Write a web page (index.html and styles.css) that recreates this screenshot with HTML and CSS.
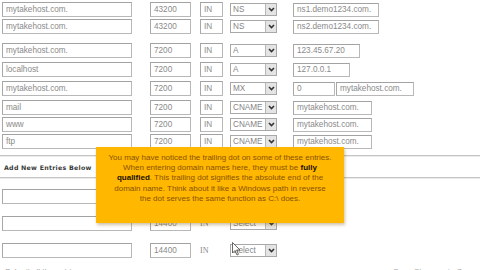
FILE: index.html
```html
<!DOCTYPE html>
<html>
<head>
<meta charset="utf-8">
<link rel="stylesheet" href="styles.css">
</head>
<body>
<div class="page">
  <div class="group g1">
    <div class="row">
      <span class="box name">mytakehost.com.</span>
      <span class="box ttl">43200</span>
      <span class="box cls">IN</span>
      <span class="sel"><span class="seltext">NS</span><span class="arrow"><svg width="9" height="9" viewBox="0 0 9 9"><path d="M2 3 L4.5 5.5 L7 3" fill="none" stroke="#333" stroke-width="1.6"/></svg></span></span>
      <span class="box val w86">ns1.demo1234.com.</span>
    </div>
    <div class="row">
      <span class="box name">mytakehost.com.</span>
      <span class="box ttl">43200</span>
      <span class="box cls">IN</span>
      <span class="sel"><span class="seltext">NS</span><span class="arrow"><svg width="9" height="9" viewBox="0 0 9 9"><path d="M2 3 L4.5 5.5 L7 3" fill="none" stroke="#333" stroke-width="1.6"/></svg></span></span>
      <span class="box val w86">ns2.demo1234.com.</span>
    </div>
  </div>
  <div class="group g2">
    <div class="row">
      <span class="box name">mytakehost.com.</span>
      <span class="box ttl">7200</span>
      <span class="box cls">IN</span>
      <span class="sel"><span class="seltext">A</span><span class="arrow"><svg width="9" height="9" viewBox="0 0 9 9"><path d="M2 3 L4.5 5.5 L7 3" fill="none" stroke="#333" stroke-width="1.6"/></svg></span></span>
      <span class="box val w67">123.45.67.20</span>
    </div>
    <div class="row">
      <span class="box name">localhost</span>
      <span class="box ttl">7200</span>
      <span class="box cls">IN</span>
      <span class="sel"><span class="seltext">A</span><span class="arrow"><svg width="9" height="9" viewBox="0 0 9 9"><path d="M2 3 L4.5 5.5 L7 3" fill="none" stroke="#333" stroke-width="1.6"/></svg></span></span>
      <span class="box val w57">127.0.0.1</span>
    </div>
    <div class="row">
      <span class="box name">mytakehost.com.</span>
      <span class="box ttl">7200</span>
      <span class="box cls">IN</span>
      <span class="sel"><span class="seltext">MX</span><span class="arrow"><svg width="9" height="9" viewBox="0 0 9 9"><path d="M2 3 L4.5 5.5 L7 3" fill="none" stroke="#333" stroke-width="1.6"/></svg></span></span>
      <span class="box val w42">0</span>
      <span class="box val2">mytakehost.com.</span>
    </div>
  </div>
  <div class="group g3">
    <div class="row">
      <span class="box name">mail</span>
      <span class="box ttl">7200</span>
      <span class="box cls">IN</span>
      <span class="sel"><span class="seltext">CNAME</span><span class="arrow"><svg width="9" height="9" viewBox="0 0 9 9"><path d="M2 3 L4.5 5.5 L7 3" fill="none" stroke="#333" stroke-width="1.6"/></svg></span></span>
      <span class="box val w79">mytakehost.com.</span>
    </div>
    <div class="row">
      <span class="box name">www</span>
      <span class="box ttl">7200</span>
      <span class="box cls">IN</span>
      <span class="sel"><span class="seltext">CNAME</span><span class="arrow"><svg width="9" height="9" viewBox="0 0 9 9"><path d="M2 3 L4.5 5.5 L7 3" fill="none" stroke="#333" stroke-width="1.6"/></svg></span></span>
      <span class="box val w79">mytakehost.com.</span>
    </div>
    <div class="row">
      <span class="box name">ftp</span>
      <span class="box ttl">7200</span>
      <span class="box cls">IN</span>
      <span class="sel"><span class="seltext">CNAME</span><span class="arrow"><svg width="9" height="9" viewBox="0 0 9 9"><path d="M2 3 L4.5 5.5 L7 3" fill="none" stroke="#333" stroke-width="1.6"/></svg></span></span>
      <span class="box val w79">mytakehost.com.</span>
    </div>
  </div>
  <div class="divider">
    <span class="addtitle">Add New Entries Below</span>
  </div>
  <div class="group g4">
    <div class="row newrow">
      <span class="box name"></span>
      <span class="box ttl">14400</span>
      <span class="plain">IN</span>
      <span class="sel"><span class="seltext">Select</span><span class="arrow"><svg width="9" height="9" viewBox="0 0 9 9"><path d="M2 3 L4.5 5.5 L7 3" fill="none" stroke="#333" stroke-width="1.6"/></svg></span></span>
    </div>
    <div class="row newrow">
      <span class="box name"></span>
      <span class="box ttl">14400</span>
      <span class="plain">IN</span>
      <span class="sel"><span class="seltext">Select</span><span class="arrow"><svg width="9" height="9" viewBox="0 0 9 9"><path d="M2 3 L4.5 5.5 L7 3" fill="none" stroke="#333" stroke-width="1.6"/></svg></span></span>
    </div>
    <div class="row newrow">
      <span class="box name"></span>
      <span class="box ttl">14400</span>
      <span class="plain">IN</span>
      <span class="sel"><span class="seltext">Select</span><span class="arrow"><svg width="9" height="9" viewBox="0 0 9 9"><path d="M2 3 L4.5 5.5 L7 3" fill="none" stroke="#333" stroke-width="1.6"/></svg></span></span>
    </div>
    <div class="row footrow">
      <span class="foottext">Submit all the entries</span>
      <span class="footline"></span>
      <span class="foottext2">Save Changes to Zone</span>
    </div>
  </div>

  <div class="tooltip">
    You may have noticed the trailing dot on some of these entries.<br>
    When entering domain names here, they must be <b>fully<br>qualified</b>. This trailing dot signifies the absolute end of the<br>
    domain name. Think about it like a Windows path in reverse<br>
    the dot serves the same function as C:\ does.
  </div>

  <svg class="cursor" width="9" height="14" viewBox="0 0 9 14"><path d="M0.5 0.5 L0.5 11 L3 8.5 L5 13 L6.5 12.3 L4.6 8 L8 8 Z" fill="#fff" stroke="#444" stroke-width="0.8"/></svg>
</div>
</body>
</html>
```
FILE: styles.css
```css
html, body {
  margin: 0;
  padding: 0;
  background: #fff;
}
.page {
  position: relative;
  width: 480px;
  height: 270px;
  overflow: hidden;
  font-family: "Liberation Sans", Arial, sans-serif;
  font-size: 8.2px;
  color: #8a8a8a;
  padding-top: 2px;
  box-sizing: border-box;
}
.group {
  display: flex;
  flex-direction: column;
}
.g1 { gap: 2px; }
.g2 { gap: 4px; margin-top: 9px; }
.g3 { gap: 2px; margin-top: 4px; }
.row {
  display: flex;
  align-items: center;
  height: 15px;
}
.box {
  box-sizing: border-box;
  height: 15px;
  border: 1px solid #b8b8b8;
  border-top-color: #a2a2a2;
  border-left-color: #a8a8a8;
  background: #fff;
  padding-left: 3px;
  line-height: 13px;
  white-space: nowrap;
  overflow: hidden;
}
.name { width: 130px; margin-left: 2px; }
.ttl { width: 41px; margin-left: 18px; }
.cls { width: 23px; margin-left: 9px; }
.sel {
  box-sizing: border-box;
  width: 47px;
  height: 13px;
  margin-left: 7px;
  border: 1px solid #a8a8a8;
  display: flex;
  align-items: stretch;
  background: #fff;
}
.seltext {
  flex: 1;
  padding-left: 2px;
  line-height: 11px;
  color: #858585;
  overflow: hidden;
}
.arrow {
  width: 10px;
  background: #e4e4e4;
  border-left: 1px solid #b8b8b8;
  display: flex;
  align-items: center;
  justify-content: center;
}
.val { margin-left: 16px; height: 14px; line-height: 12px; }
.w86 { width: 86px; }
.w67 { width: 67px; }
.w57 { width: 57px; }
.w42 { width: 42px; }
.w79 { width: 79px; }
.val2 { width: 78px; margin-left: 1px; height: 14px; line-height: 12px; }

.divider {
  margin-top: 6px;
  height: 21px;
  border-top: 1px solid #c4c4c4;
  border-bottom: 1px solid #c4c4c4;
  box-shadow: 0 1px 0 #ececec, inset 0 1px 0 #ececec;
  display: flex;
  align-items: center;
}
.addtitle {
  margin-left: 4px;
  margin-top: 2px;
  font-family: "DejaVu Sans", Verdana, sans-serif;
  font-weight: bold;
  font-size: 6.3px;
  letter-spacing: 0.25px;
  color: #3a3a3a;
}
.g4 { margin-top: 11px; gap: 12px; }
.newrow .name { height: 15px; }
.plain {
  width: 23px;
  margin-left: 9px;
  font-family: "Liberation Serif", serif;
  font-size: 8px;
  color: #888;
  text-align: left;
}
.footrow { height: 10px; margin-top: -4px; align-items: flex-end; }
.foottext {
  margin-left: 5px;
  font-size: 8px;
  color: #9a9a9a;
}
.footline {
  margin-left: auto;
  width: 98px;
  border-bottom: 1px solid #c8c8c8;
  margin-bottom: 2px;
}
.foottext2 {
  margin-right: 5px;
  font-size: 8px;
  color: #a8a8a8;
}

.tooltip {
  position: absolute;
  left: 96px;
  top: 147px;
  width: 248px;
  height: 76px;
  box-sizing: border-box;
  background: #ffb700;
  box-shadow: 1px 2px 3px rgba(120, 80, 0, 0.35);
  color: #8a5200;
  font-family: "Liberation Sans", Arial, sans-serif;
  font-size: 8px;
  line-height: 10.2px;
  text-align: center;
  padding-top: 6px;
}
.tooltip b { color: #1a1000; }
.cursor {
  position: absolute;
  left: 232px;
  top: 242px;
}
```
